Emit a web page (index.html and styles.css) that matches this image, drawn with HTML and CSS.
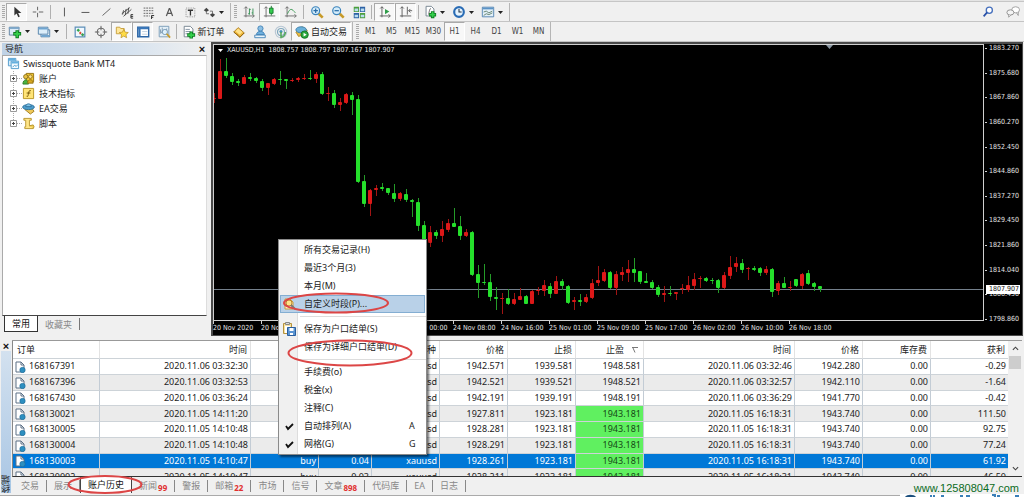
FILE: index.html
```html
<!DOCTYPE html>
<html lang="zh-CN">
<head>
<meta charset="utf-8">
<title>Swissquote Bank MT4</title>
<link rel="stylesheet" href="styles.css">
</head>
<body>
<svg class="defs" aria-hidden="true">
  <symbol id="dd" viewBox="0 0 5 3"><path d="M0 0h5L2.500 3z" fill="#222"/></symbol>
  <symbol id="doc" viewBox="0 0 12 12"><path d="M2 1h5l3 3v7H2z" fill="#fff" stroke="#5c7186"/><path d="M7 1v3h3" fill="none" stroke="#5c7186"/><circle cx="8.500" cy="9" r="2.700" fill="#2d8fc0" stroke="#1b6a98" stroke-width=".6"/></symbol>
  <symbol id="plusbox" viewBox="0 0 9 9"><path d="M1.500 1.500h6v6h-6z" fill="#fff" stroke="#999"/><path d="M3 4.500h3M4.500 3v3" stroke="#444"/></symbol>
</svg>

<header class="toolbars">
  <div class="bar">
    <div class="group">
      <span class="grip"></span>
      <button class="tool pressed" aria-label="光标"><svg viewBox="0 0 16 16"><path d="M5 2v10l2.500-2.200L9.500 14l1.700-.8-1.900-4H13z" fill="#333"/></svg></button>
      <button class="tool" aria-label="十字准线"><svg viewBox="0 0 16 16"><path d="M2 8h4M9 8h5M7.500 2v4M7.500 9v5" stroke="#555"/></svg></button>
      <span class="sep"></span>
      <button class="tool" aria-label="垂直线"><svg viewBox="0 0 16 16"><path d="M8.500 3v10" stroke="#444"/></svg></button>
      <button class="tool" aria-label="水平线"><svg viewBox="0 0 16 16"><path d="M4 8.500h9" stroke="#444"/></svg></button>
      <button class="tool" aria-label="趋势线"><svg viewBox="0 0 16 16"><path d="M4 12l9-8" stroke="#555"/></svg></button>
      <button class="tool" aria-label="通道"><svg viewBox="0 0 16 16"><path d="M2 10l9-7M4 13l9-8M4 6l-1 5M7 4.500l-1 7M10 3l-1 7" stroke="#444"/><path d="M15 11h-2.500v4H15M12.500 13H15" fill="none" stroke="#222"/></svg></button>
      <button class="tool" aria-label="斐波纳契"><svg viewBox="0 0 16 16"><path d="M3 3.500h11M3 6.500h11M3 9.500h11M3 12.500h7" stroke="#555" stroke-dasharray="2 1"/><path d="M12 16v-4h3M12 14h2" fill="none" stroke="#222"/></svg></button>
      <button class="tool" aria-label="文字"><svg viewBox="0 0 16 16"><path d="M5 12.500L8.300 4h.6l3.200 8.500M6.200 9.500H11" fill="none" stroke="#555" stroke-width="1.400"/></svg></button>
      <button class="tool" aria-label="文本标签"><svg viewBox="0 0 16 16"><path d="M3.500 3.500h10v10h-10z" fill="none" stroke="#888" stroke-dasharray="1 1"/><path d="M5.500 6h6M8.500 6v6" stroke="#333" stroke-width="1.500"/></svg></button>
      <button class="tool drop" aria-label="箭头"><svg viewBox="0 0 16 16"><path d="M2 6l3-3 3 3-3 2zM9 11l3 3 3-3-3-2z" fill="#444"/><path d="M5 7v3h3M12 10V7H9" fill="none" stroke="#666"/></svg><svg class="dd"><use href="#dd"/></svg></button>
    </div>
    <div class="group">
      <span class="grip"></span>
      <button class="tool" aria-label="柱状图"><svg viewBox="0 0 16 16"><path d="M4.500 2v12M2 12.500h12M2.500 4l2-2 2 2M12 10.500l2 2-2 2" fill="none" stroke="#666"/><path d="M8.500 4v7M7 10h1.500M8.500 5H10M12.500 4v7M11 9h1.500" stroke="#2a8a4a"/></svg></button>
      <button class="tool pressed" aria-label="阴阳烛"><svg viewBox="0 0 16 16"><path d="M3.500 2v12M1 12.500h13M1.500 4l2-2 2 2" fill="none" stroke="#666"/><path d="M9.500 1v11" stroke="#14752a"/><path d="M7.500 3.500h4v6h-4z" fill="#35cf50" stroke="#14752a"/></svg></button>
      <button class="tool" aria-label="折线图"><svg viewBox="0 0 16 16"><path d="M3.500 2v12M1 12.500h13M1.500 4l2-2 2 2M12 10.500l2 2-2 2" fill="none" stroke="#666"/><path d="M4 10c3-7 5-6 9-1" fill="none" stroke="#33954c"/></svg></button>
      <span class="sep"></span>
      <button class="tool" aria-label="放大"><svg viewBox="0 0 16 16"><path d="M10 10l4.500 4.500" stroke="#c79a28" stroke-width="3"/><circle cx="6.500" cy="6.500" r="4.500" fill="#d4ecfa" stroke="#3a82bb" stroke-width="1.400"/><path d="M4 6.500h5M6.500 4v5" stroke="#286ca8" stroke-width="1.400"/></svg></button>
      <button class="tool" aria-label="缩小"><svg viewBox="0 0 16 16"><path d="M10 10l4.500 4.500" stroke="#c79a28" stroke-width="3"/><circle cx="6.500" cy="6.500" r="4.500" fill="#d4ecfa" stroke="#3a82bb" stroke-width="1.400"/><path d="M4 6.500h5" stroke="#286ca8" stroke-width="1.400"/></svg></button>
      <button class="tool" aria-label="排列窗口"><svg viewBox="0 0 16 16"><path d="M2 2h6v6H2zM9 9h6v6H9z" fill="#4b9e3d"/><path d="M9 2h6v6H9zM2 9h6v6H2z" fill="#2d62a5"/><path d="M3 4h4v3H3zM10 4h4v3h-4zM3 11h4v3H3zM10 11h4v3h-4z" fill="#b9dcf0"/></svg></button>
      <span class="sep"></span>
      <button class="tool pressed" aria-label="自动滚动"><svg viewBox="0 0 16 16"><path d="M4.500 2v12M2 12.500h12M2.500 4l2-2 2 2M12 10.500l2 2-2 2" fill="none" stroke="#555"/><path d="M8 4.500l5 3-5 3z" fill="#2f9c49"/></svg></button>
      <button class="tool pressed" aria-label="图表平移"><svg viewBox="0 0 16 16"><path d="M3.500 2v12M1 12.500h13M1.500 4l2-2 2 2M9.500 2v9M15 6.500h-4M13 4.500l-2 2 2 2" fill="none" stroke="#555"/></svg></button>
      <span class="sep"></span>
      <button class="tool drop" aria-label="指标"><svg viewBox="0 0 16 16"><path d="M3.500 1.500h6l3 3v8h-9z" fill="#fff" stroke="#6d7b88"/><path d="M6 11c1 0 1-7 3-7" fill="none" stroke="#555"/><path d="M7 11h8M11 7v8" stroke="#0d7c1f" stroke-width="4"/><path d="M8 11h6M11 8v6" stroke="#35d04c" stroke-width="2"/></svg><svg class="dd"><use href="#dd"/></svg></button>
      <button class="tool drop" aria-label="时间周期"><svg viewBox="0 0 16 16"><circle cx="8" cy="8" r="5.500" fill="#e6f4ff" stroke="#2a6cb5" stroke-width="2.500"/><path d="M8 4.500V8h3" fill="none" stroke="#234" stroke-width="1.200"/></svg><svg class="dd"><use href="#dd"/></svg></button>
      <button class="tool drop" aria-label="模板"><svg viewBox="0 0 16 16"><path d="M1.500 2.500h13v11h-13z" fill="#e4f1fa" stroke="#4d7fae"/><path d="M2 4h12" stroke="#5b93c6" stroke-width="2"/><path d="M3 8l3-1 3 2 4-2M3 12l3-2 3 1 4-2" fill="none" stroke="#5b7b65"/></svg><svg class="dd"><use href="#dd"/></svg></button>
    </div>
    <div class="corner">
      <button class="tool" aria-label="搜索"><svg viewBox="0 0 16 16"><circle cx="9.500" cy="6" r="3.500" fill="#fff" stroke="#4670bd" stroke-width="1.500"/><path d="M7 8.500L3 13" stroke="#2850a8" stroke-width="2"/></svg></button>
      <button class="tool" aria-label="聊天"><svg viewBox="0 0 16 16"><ellipse cx="11" cy="5.500" rx="4.500" ry="3.500" fill="#fff" stroke="#999"/><ellipse cx="5" cy="8.500" rx="4" ry="3" fill="#f4f4f4" stroke="#888"/><path d="M3 11v3l3-3M12 9l2 3V8" fill="#eee" stroke="#888" stroke-width=".8"/></svg></button>
    </div>
  </div>
  <div class="bar">
    <div class="group">
      <span class="grip"></span>
      <button class="tool drop" aria-label="新图表"><svg viewBox="0 0 16 16"><path d="M1.500 2.500h11v9h-11z" fill="#dcecf7" stroke="#5a7d9b"/><path d="M1 3.500h12" stroke="#7ba6c9" stroke-width="2"/><path d="M6 10h9M10.500 6v9" stroke="#0d7c1f" stroke-width="4"/><path d="M7 10h7M10.500 7v7" stroke="#35d04c" stroke-width="2"/></svg><svg class="dd"><use href="#dd"/></svg></button>
      <button class="tool drop" aria-label="配置文件"><svg viewBox="0 0 16 16"><path d="M4.500 5.500h10v8h-10z" fill="#f3f9fd" stroke="#4b7ca5"/><path d="M1.500 2.500h11v8h-11z" fill="#dceefa" stroke="#4b7ca5"/><path d="M2 4h10M5 12.500h9" stroke="#6fa5d1" stroke-width="2"/></svg><svg class="dd"><use href="#dd"/></svg></button>
      <span class="sep"></span>
      <button class="tool" aria-label="市场报价"><svg viewBox="0 0 16 16"><path d="M2.500 2.500h11v11h-11z" fill="#f0f8ff" stroke="#5d8fb8" stroke-width="1.400"/><path d="M4 6l2-2 2 2-2 2z" fill="#32a548"/><path d="M8 7l2 2-2 2-1-2z" fill="#d64632"/><path d="M9 11l2-2 2 2-2 2z" fill="#3a9e50"/></svg></button>
      <button class="tool" aria-label="数据窗口"><svg viewBox="0 0 16 16"><circle cx="8" cy="8" r="4.500" fill="none" stroke="#555"/><path d="M8 1v5M8 10v5M1 8h5M10 8h5" stroke="#555"/></svg></button>
      <button class="tool pressed" aria-label="导航"><svg viewBox="0 0 16 16"><path d="M1.500 2.500h4l1 1.500h4v6h-9z" fill="#ffe79a" stroke="#c39a34"/><path d="M10 5l1.600 3.200 3.600.4-2.700 2.400.8 3.500-3.300-1.800-3.200 1.800.7-3.500L5 8.600l3.500-.4z" fill="#ffdc45" stroke="#b98c1c" stroke-width=".8"/></svg></button>
      <button class="tool pressed" aria-label="终端"><svg viewBox="0 0 16 16"><path d="M2 2.500h12.500v11H2z" fill="#fff" stroke="#2b65a5" stroke-width="1.600"/><path d="M2 3.500h12M4 3v10" stroke="#3976b8" stroke-width="2.500"/><path d="M7 7.500h6M7 10.500h6" stroke="#bcd"/></svg></button>
      <button class="tool" aria-label="策略测试"><svg viewBox="0 0 16 16"><path d="M2.500 1.500h11v12h-11z" fill="#e3eff7" stroke="#7497b5"/><path d="M4 5v4M6 3v5M4 10l3-4 4 5M11 4v5" fill="none" stroke="#7a97ae"/><circle cx="9" cy="8" r="3" fill="#dff1fb" stroke="#7396b3"/><path d="M11 10l4 4.500" stroke="#c99c2c" stroke-width="2"/></svg></button>
      <span class="sep"></span>
      <button class="tool labelled"><svg viewBox="0 0 16 16"><path d="M2.500 1.500h7l3 3v9h-10z" fill="#fff" stroke="#6d7b88"/><path d="M4 5h5M4 7.500h6M4 10h3" stroke="#789"/><path d="M6 11.500h9M10.500 7.500v8" stroke="#0d7c1f" stroke-width="4"/><path d="M7 11.500h7M10.500 8.500v6" stroke="#35d04c" stroke-width="2"/></svg>新订单</button>
      <button class="tool" aria-label="MetaEditor"><svg viewBox="0 0 16 16"><path d="M2 8l5-5 7 6-5 5z" fill="#f0b93c" stroke="#a9781a"/><path d="M2 8l5 4 2 2 5-5" fill="none" stroke="#8c6010"/><path d="M4 7l3-3 5 4-3 3z" fill="#ffe28a"/></svg></button>
      <button class="tool" aria-label="账户"><svg viewBox="0 0 16 16"><circle cx="8.500" cy="4" r="3" fill="#8cc0e4" stroke="#3f80b5"/><path d="M4 11c0-5 9-5 9 0z" fill="#6fb0de" stroke="#3f80b5"/><path d="M2 11.500h12v3H2z" fill="#e9f4fb" stroke="#3f80b5"/></svg></button>
      <button class="tool" aria-label="信号"><svg viewBox="0 0 16 16"><circle cx="8" cy="8" r="6.500" fill="none" stroke="#b7c6d3" stroke-width="1.200"/><circle cx="8" cy="8" r="4" fill="none" stroke="#7fa7bd" stroke-width="1.400"/><circle cx="8" cy="7.500" r="1.800" fill="#4596b5"/><path d="M8 8v7M8 14c3 0 5-3 5-6" fill="none" stroke="#55a85a" stroke-width="1.800"/></svg></button>
      <button class="tool labelled auto pressed"><svg viewBox="0 0 16 16"><path d="M1 8l7-6 6 4-3 5-7 2z" fill="#e9bd44" stroke="#a98424"/><ellipse cx="7" cy="5.500" rx="6" ry="3.500" fill="#69b0d9" stroke="#3a7ba8"/><circle cx="11" cy="11" r="4.200" fill="#28a73c" stroke="#157023"/><path d="M9.800 8.800l3.500 2.200-3.500 2.200z" fill="#fff"/></svg>自动交易</button>
    </div>
    <div class="group">
      <span class="grip"></span>
      <button class="tool period">M1</button><button class="tool period">M5</button><button class="tool period">M15</button><button class="tool period">M30</button><button class="tool period pressed">H1</button><button class="tool period">H4</button><button class="tool period">D1</button><button class="tool period">W1</button><button class="tool period">MN</button>
    </div>
  </div>
</header>

<main class="workspace">
  <aside class="navigator">
    <div class="nav-title"><span>导航</span><button class="close" aria-label="关闭导航">×</button></div>
    <div class="tree">
      <div class="root"><svg viewBox="0 0 14 14"><path d="M1.500 1.500h8v8h-8z" fill="#d6ecfa" stroke="#4f9acb"/><path d="M4.500 4.500h8v8h-8z" fill="#f3faff" stroke="#4f9acb"/><path d="M5 6h7M2 3h7" stroke="#63b0df" stroke-width="2"/><path d="M6 11l2-2 2 1 2-2" fill="none" stroke="#4f9acb"/></svg>Swissquote Bank MT4</div>
      <ul>
        <li><svg class="node"><use href="#plusbox"/></svg><svg class="ico" viewBox="0 0 14 14"><path d="M4.500 1.500h8v9h-8z" fill="#f1c834" stroke="#957313"/><circle cx="4" cy="5" r="2.300" fill="#e8c142" stroke="#8b7320"/><path d="M1 13c0-6 6-6 6 0z" fill="#4cb33f" stroke="#2c7a25"/><circle cx="9" cy="5" r="2" fill="#fae292" stroke="#957313"/><path d="M6 12c0-5 6-5 6 0z" fill="#d8a820" stroke="#957313"/></svg>账户</li>
        <li><svg class="node"><use href="#plusbox"/></svg><svg class="ico" viewBox="0 0 14 14"><path d="M1.500 1.500h11v11h-11z" fill="#ffe477" stroke="#b99422"/><path d="M9.500 4c-2-1-2 1-2.500 3s-.5 4-2 3M5 6.500h4" fill="none" stroke="#6b4c00"/></svg>技术指标</li>
        <li><svg class="node"><use href="#plusbox"/></svg><svg class="ico" viewBox="0 0 14 14"><path d="M3 8l6 5 4-3-3-4z" fill="#efc857" stroke="#a07c22"/><ellipse cx="7" cy="5.500" rx="6.300" ry="2.700" fill="#4f9fce" stroke="#2d6f9b"/><path d="M4 5c0-4 6-4 6 0z" fill="#83c4e8" stroke="#2d6f9b"/></svg>EA交易</li>
        <li><svg class="node"><use href="#plusbox"/></svg><svg class="ico" viewBox="0 0 14 14"><path d="M2 1.500h8v2H8v6h4v3H3v-2h1v-7H2z" fill="#ffe688" stroke="#b8952f"/><path d="M8 9.500l4-1 1 2-1 2" fill="#f2cf55" stroke="#b8952f"/></svg>脚本</li>
      </ul>
    </div>
    <div class="nav-tabs"><button class="active">常用</button><button>收藏夹</button></div>
  </aside>

  <section class="chart">
    <div class="plot">
      <svg class="candles" id="candles" role="img" aria-label="XAUUSD H1"></svg>
      <div class="chart-title"><svg viewBox="0 0 5 3"><path d="M0 0h5L2.500 3z" fill="#fff"/></svg><span>XAUUSD,H1</span><span>1808.757 1808.797 1807.167 1807.907</span></div>
    </div>
    <div class="prices">
      <span>1883.270</span><span>1875.680</span><span>1867.860</span><span>1860.270</span><span>1852.450</span><span>1844.860</span><span>1837.270</span><span>1829.450</span><span>1821.860</span><span>1814.040</span><span>1806.450</span><span>1798.860</span>
      <strong>1807.907</strong>
    </div>
    <div class="times"><span>20 Nov 2020</span><span>20 Nov 17:00</span><span>23 Nov 02:00</span><span>23 Nov 10:00</span><span>24 Nov 00:00</span><span>24 Nov 08:00</span><span>24 Nov 16:00</span><span>25 Nov 01:00</span><span>25 Nov 09:00</span><span>25 Nov 17:00</span><span>26 Nov 02:00</span><span>26 Nov 10:00</span><span>26 Nov 18:00</span></div>
  </section>
</main>

<section class="terminal">
  <div class="side"><button class="close" aria-label="关闭终端">×</button><div class="side-label"><span>终端</span></div></div>
  <div class="terminal-body">
    <div class="history">
      <div class="table-wrap">
      <table>
        <colgroup><col class="c-order"><col class="c-time"><col class="c-num"><col class="c-lot"><col class="c-num"><col class="c-num"><col class="c-num"><col class="c-num"><col class="c-time"><col class="c-num"><col class="c-num"><col class="c-profit"></colgroup>
        <thead><tr><th>订单</th><th>时间</th><th>类型</th><th>手数</th><th>交易品种</th><th>价格</th><th>止损</th><th class="sorted">止盈<svg viewBox="0 0 6 6"><path d="M0 .5h6M1 1l2 4.500" fill="none" stroke="#777"/></svg></th><th>时间</th><th>价格</th><th>库存费</th><th>获利</th></tr></thead>
        <tbody>
          <tr><td><svg><use href="#doc"/></svg>168167391</td><td>2020.11.06 03:32:30</td><td>buy</td><td>0.04</td><td>xauusd</td><td>1942.571</td><td>1939.581</td><td>1948.581</td><td>2020.11.06 03:32:46</td><td>1942.280</td><td>0.00</td><td>-0.29</td></tr>
          <tr><td><svg><use href="#doc"/></svg>168167396</td><td>2020.11.06 03:32:53</td><td>buy</td><td>0.04</td><td>xauusd</td><td>1942.521</td><td>1939.521</td><td>1948.521</td><td>2020.11.06 03:32:57</td><td>1942.110</td><td>0.00</td><td>-1.64</td></tr>
          <tr><td><svg><use href="#doc"/></svg>168167430</td><td>2020.11.06 03:36:24</td><td>buy</td><td>0.01</td><td>xauusd</td><td>1942.191</td><td>1939.191</td><td>1948.191</td><td>2020.11.06 03:36:29</td><td>1941.770</td><td>0.00</td><td>-0.42</td></tr>
          <tr><td><svg><use href="#doc"/></svg>168130021</td><td>2020.11.05 14:11:20</td><td>buy</td><td>0.07</td><td>xauusd</td><td>1927.811</td><td>1923.181</td><td class="hit">1943.181</td><td>2020.11.05 16:18:31</td><td>1943.740</td><td>0.00</td><td>111.50</td></tr>
          <tr><td><svg><use href="#doc"/></svg>168130005</td><td>2020.11.05 14:10:48</td><td>buy</td><td>0.06</td><td>xauusd</td><td>1928.281</td><td>1923.181</td><td class="hit">1943.181</td><td>2020.11.05 16:18:31</td><td>1943.740</td><td>0.00</td><td>92.75</td></tr>
          <tr><td><svg><use href="#doc"/></svg>168130004</td><td>2020.11.05 14:10:48</td><td>buy</td><td>0.05</td><td>xauusd</td><td>1928.291</td><td>1923.181</td><td class="hit">1943.181</td><td>2020.11.05 16:18:31</td><td>1943.740</td><td>0.00</td><td>77.24</td></tr>
          <tr class="selected"><td><svg><use href="#doc"/></svg>168130003</td><td>2020.11.05 14:10:47</td><td>buy</td><td>0.04</td><td>xauusd</td><td>1928.261</td><td>1923.181</td><td class="hit">1943.181</td><td>2020.11.05 16:18:31</td><td>1943.740</td><td>0.00</td><td>61.92</td></tr>
          <tr><td><svg><use href="#doc"/></svg>168130002</td><td>2020.11.05 14:10:47</td><td>buy</td><td>0.03</td><td>xauusd</td><td>1928.211</td><td>1923.181</td><td class="hit">1943.181</td><td>2020.11.05 16:18:31</td><td>1943.740</td><td>0.00</td><td>46.50</td></tr>
        </tbody>
      </table>
      </div>
      <div class="scroll"><svg viewBox="0 0 8 5"><path d="M1 4l3-3 3 3" fill="none" stroke="#444" stroke-width="1.300"/></svg><i></i><svg viewBox="0 0 8 5"><path d="M1 1l3 3 3-3" fill="none" stroke="#444" stroke-width="1.300"/></svg></div>
    </div>
    <nav class="tabs"><button>交易</button><button>展示</button><button class="active">账户历史</button><button>新闻<sub>99</sub></button><button>警报</button><button>邮箱<sub>22</sub></button><button>市场</button><button>信号</button><button>文章<sub>898</sub></button><button>代码库</button><button>EA</button><button>日志</button></nav>
  </div>
</section>
<footer class="edge"></footer>

<div class="menu" role="menu">
  <button role="menuitem">所有交易记录(H)</button>
  <button role="menuitem">最近3个月(3)</button>
  <button role="menuitem">本月(M)</button>
  <button role="menuitem" class="hot"><svg viewBox="0 0 14 14"><path d="M3 2h5l3 3v7H3z" fill="#fff3c8" stroke="#c99a3a"/><circle cx="7" cy="6" r="3" fill="#ffe28a" stroke="#b8862b"/><path d="M9 8l4 4" stroke="#777" stroke-width="2"/></svg>自定义时段(P)...</button>
  <hr>
  <button role="menuitem"><svg viewBox="0 0 14 14"><path d="M1.500 1.500h8v10h-8z" fill="#f7e2a0" stroke="#b6923c"/><path d="M3.500 .5h4v2h-4z" fill="#ddd" stroke="#888"/><path d="M3 4h5v7H3z" fill="#fff"/><path d="M5.500 5.500h8v8h-8z" fill="#5a94d2" stroke="#2b5f9e"/><path d="M7.500 6h4v3h-4zM8 11h3v2H8z" fill="#fff"/></svg>保存为户口结单(S)</button>
  <button role="menuitem">保存为详细户口结单(D)</button>
  <hr>
  <button role="menuitem">手续费(o)</button>
  <button role="menuitem">税金(x)</button>
  <button role="menuitem">注释(C)</button>
  <button role="menuitem"><svg viewBox="0 0 14 14"><path d="M4 7l2 3 5-5" fill="none" stroke="#111" stroke-width="1.800"/></svg>自动排列(A)<kbd>A</kbd></button>
  <button role="menuitem"><svg viewBox="0 0 14 14"><path d="M4 7l2 3 5-5" fill="none" stroke="#111" stroke-width="1.800"/></svg>网格(G)<kbd>G</kbd></button>
</div>

<svg class="ring ring-period" viewBox="0 0 106 22"><ellipse cx="53" cy="11" rx="52" ry="9.500"/></svg>
<svg class="ring ring-save" viewBox="0 0 126 28"><ellipse cx="63" cy="14" rx="61.500" ry="12.500"/></svg>
<svg class="ring ring-tab" viewBox="0 0 76 19"><ellipse cx="38" cy="9.500" rx="36.500" ry="8.500"/></svg>

<a class="watermark" href="#">www.125808047.com</a>
<svg class="logo" viewBox="0 0 124 4" aria-hidden="true"><path d="M0 1h124v3H0z" fill="#fff"/><path d="M5 4c2-3 9-3 11 0z" fill="#1c4f7e"/><path d="M31 2v2M33 3h2M41 3h3M60 3h3M66 3h4M92 2h3v2M97 3h3M115 3h4" stroke="#3a7fb8" stroke-width="2"/></svg>
<script src="chart.js"></script>
</body>
</html>
```
FILE: styles.css
```css
* { box-sizing: border-box; }
body {
  margin: 0;
  min-height: 100vh;
  display: flex;
  flex-direction: column;
  background: #f0f0f0;
  color: #222;
  font: 9px/12px "Noto Sans", "Noto Sans CJK SC", sans-serif;
  position: relative;
  overflow: hidden;
}
button { font: inherit; color: inherit; background: none; border: 0; padding: 0; margin: 0; }
.defs { display: none; }

.toolbars { border-top: 1px solid #e4e4e4; box-shadow: inset 0 1px #c6c6c6; padding-top: 2px; }
.bar { display: flex; height: 19px; border-bottom: 1px solid #c4c4c4; }
.bar + .bar { height: 20px; }
.group { display: flex; align-items: stretch; padding-right: 1px; border-right: 1px solid #b5b5b5; }
.group + .group { margin-left: 1px; }
.grip { width: 6px; margin: 2px 0; background: repeating-linear-gradient(#aaa 0 1px, transparent 1px 2px) 2px 0 / 3px 100% no-repeat; }
.tool { width: 21px; display: flex; align-items: center; justify-content: center; flex: none; white-space: nowrap; }
.tool svg { width: 14px; height: 14px; }
.pressed { background: #f8f8f8; border: 1px solid; border-color: #a9a9a9 #fff #fff #a9a9a9; }
.drop { width: 29px; justify-content: flex-start; padding-left: 2px; gap: 3px; }
.tool .dd { width: 5px; height: 3px; }
.sep { width: 5px; margin: 2px 0; background: linear-gradient(#b0b0b0, #b0b0b0) 2px 0 / 1px 100% no-repeat; }
.labelled { width: 49px; gap: 1px; }
.auto { width: 60px; gap: 2px; }
.period { font: 8px/10px "DejaVu Sans Condensed", sans-serif; color: #444; }
.corner { margin-left: auto; padding-right: 1px; display: flex; gap: 4px; }

.workspace { flex: 1; min-height: 294px; display: flex; gap: 2px; padding-right: 1px; }
.navigator { width: 209px; display: flex; flex-direction: column; flex: none; padding: 1px 2px 0 2px; }
.nav-title { display: flex; justify-content: space-between; align-items: center; height: 12px; padding: 0 1px 0 3px; background: linear-gradient(90deg, #bfd2e6, #d5e2ef 60%, #f0f0f0); }
.close { font: bold 11px/10px "Liberation Sans", sans-serif; width: 8px; color: #111; }
.tree { flex: 1; background: #fff; border: 1px solid #aaa; border-right-color: #ddd; border-bottom-color: #444; padding: 0 4px; }
.root { display: flex; align-items: center; gap: 3px; height: 15px; line-height: 15px; }
.tree svg { width: 13px; height: 13px; flex: none; }
.tree ul { list-style: none; margin: 0 0 0 6px; padding: 0; background: repeating-linear-gradient(#aaa 0 1px, transparent 1px 2px) 0 0 / 1px 52px no-repeat; }
.tree li { display: flex; align-items: center; height: 15px; line-height: 15px; gap: 4px; background: repeating-linear-gradient(90deg, #aaa 0 1px, transparent 1px 2px) 0 7px / 10px 1px no-repeat; }
.tree .node { width: 9px; height: 9px; margin-left: -4px; }
.nav-tabs { height: 20px; display: flex; align-items: flex-start; padding-left: 2px; color: #888; }
.nav-tabs button { height: 16px; padding: 0 7px; border-right: 1px solid #777; line-height: 15px; }
.nav-tabs button:not(.active) { height: 12px; margin-top: 2px; line-height: 11px; }
.nav-tabs .active { background: #fff; color: #111; border: 1px solid #333; border-top: 0; }

.chart { flex: 1; min-width: 0; background: #000; border: 2px solid #4a4a4a; border-right-width: 1px; border-bottom-width: 1px; display: grid; grid-template: 1fr 14px / 1fr 38px; color: #e4e4e4; font: 7px/9px "DejaVu Sans Condensed", sans-serif; }
.plot { border: 1px solid #d0d0d0; position: relative; overflow: hidden; }
.candles { display: block; width: 100%; height: 100%; overflow: hidden; }
.chart-title { position: absolute; top: 1px; left: 4px; display: flex; align-items: center; gap: 4px; }
.chart-title svg { width: 5px; height: 3px; }
.prices { position: relative; display: flex; flex-direction: column; justify-content: space-between; padding: 0 0 0 1px; margin-bottom: -3px; }
.prices span { display: flex; align-items: center; gap: 2px; }
.prices span::before { content: ""; width: 2px; height: 1px; background: #d0d0d0; }
.prices strong { position: absolute; top: 241px; left: 2px; right: 2px; padding-left: 3px; background: #fff; color: #111; font-weight: normal; }
.times { display: flex; grid-column: 1 / -1; }
.times span { width: 48px; flex: none; white-space: nowrap; line-height: 14px; background: linear-gradient(#d0d0d0, #d0d0d0) 0 0 / 1px 3px no-repeat; }

.terminal { display: flex; margin-top: 4px; padding-right: 2px; }
.side { width: 12px; padding: 1px 1px 2px 1px; display: flex; flex-direction: column; align-items: center; }
.side-label { flex: 1; width: 10px; background: linear-gradient(#d3e1ef, #a9c6e4); display: flex; align-items: flex-end; }
.side-label span { writing-mode: vertical-rl; transform: rotate(180deg); line-height: 10px; white-space: nowrap; }
.terminal-body { flex: 1; min-width: 0; border-top: 1px solid #999; }
.history { height: 136px; overflow: hidden; display: flex; background: #fff; border-bottom: 1px solid #333; border-left: 1px solid #888; }
.table-wrap { flex: 1; }
table { width: 100%; height: 144px; table-layout: fixed; border-collapse: separate; border-spacing: 0; line-height: 14px; }
.c-order { width: 87px; } .c-time { width: 151px; } .c-num { width: 68px; } .c-lot { width: 53px; } .c-profit { width: 77px; }
th, td { padding: 0 2px; text-align: right; white-space: nowrap; border-right: 1px solid #c3ccd5; border-bottom: 1px solid #cdd3d8; }
th { font-weight: normal; padding-right: 3px; height: 18px; border-right-color: #e3e3e3; }
th:first-child { text-align: left; padding-left: 4px; }
td:first-child { text-align: left; padding-left: 1px; }
td:last-child, th:last-child { border-right: 0; }
td svg { width: 12px; height: 12px; vertical-align: middle; margin-right: 3px; }
th svg { width: 6px; height: 6px; margin: 0 2px 0 8px; }
tbody tr:nth-child(even) { background: #ebebeb; }
tbody tr.selected { background: #0078d7; color: #fff; }
td.hit { background: #60f060; color: #164816; }
.scroll { width: 14px; background: #f0f0f0; display: flex; flex-direction: column; align-items: center; padding: 5px 0; }
.scroll svg { width: 7px; height: 5px; }
.scroll i { width: 12px; height: 13px; margin: 5px 0 auto; background: #cdcdcd; }
.tabs { display: flex; height: 18px; padding: 0 0 0 2px; color: #888; }
.tabs button { height: 12px; margin-top: 3px; padding: 0 7px; border-right: 1px solid #888; line-height: 11px; white-space: nowrap; display: flex; }
.tabs .active { height: 16px; margin-top: 0; line-height: 16px; background: #fff; color: #111; border-left: 1px solid #444; border-color: #444; }
.tabs sub { color: #e03030; font: bold 8px/8px "Noto Sans", sans-serif; margin: 4px 0 0 1px; }
.edge { height: 2px; border-top: 1px solid #aaa; background: #fff; }

.menu { position: absolute; left: 278px; top: 239px; width: 149px; padding: 1px; border: 1px solid #8a8a8a; box-shadow: 2px 2px 2px #0008; background: linear-gradient(90deg, #f0f0f0 18px, #ddd 18px 19px, #fff 19px); display: flex; flex-direction: column; }
.menu button { height: 18px; display: grid; grid-template-columns: 24px 1fr 16px; align-items: center; text-align: left; white-space: nowrap; }
.menu button::before { content: ""; grid-column: 1; grid-row: 1; }
.menu svg { grid-column: 1; grid-row: 1; width: 14px; height: 14px; margin-left: 2px; }
.menu kbd { font: inherit; grid-column: 3; }
.menu .hot { background: #b9d1e8; box-shadow: inset 0 0 0 1px #84aed2; }
.menu hr { width: 126px; height: 1px; border: 0; margin: 3px 0 3px 20px; background: #ddd; }

.ring { position: absolute; fill: none; stroke: #dc4646; stroke-width: 2; }
.ring-period { left: 283px; top: 292px; width: 106px; height: 22px; }
.ring-save { left: 287px; top: 339px; width: 126px; height: 28px; }
.ring-tab { left: 67px; top: 475px; width: 76px; height: 19px; }
.watermark { position: absolute; right: 5px; bottom: 2px; font: 11px/13px "Liberation Sans", sans-serif; color: #0b6b1c; text-decoration: none; }
.logo { position: absolute; right: 0; bottom: 0; width: 124px; height: 4px; }
```
FILE: chart.js
```js
// Each candle: colour, wick top, wick bottom, body top, body bottom (screen rows).
const candles = `
r 93 103 98 99|r 59 99 71 99|g 58 78 71 76|g 73 85 76 82|g 79 86 81 83|r 75 84 77 84|g 73 81 77 79|g 77 83 78 81
g 79 91 81 88|r 83 95 83 88|r 78 85 79 84|g 71 85 79 80|g 79 89 79 81|r 78 82 80 81|r 77 82 78 80|r 74 80 78 79
g 70 80 78 79|r 72 83 74 79|g 72 95 74 94|r 87 101 93 94|g 90 108 93 105|r 98 111 102 105|r 93 104 94 103|g 92 115 95 100
g 95 183 99 182|g 175 207 181 204|r 189 216 190 204|r 185 196 188 190|g 183 191 187 189|g 188 195 188 193|g 184 202 193 199|r 192 201 193 199
g 189 202 194 200|g 199 217 200 202|g 198 231 202 226|g 221 245 225 240|r 226 247 232 243|g 230 239 232 236|r 221 242 229 236|r 219 232 223 230
g 208 227 223 227|g 216 240 226 236|r 229 237 232 236|g 231 276 232 275|g 265 298 274 283|g 264 285 282 283|g 274 301 282 297|g 287 310 297 299
r 293 314 298 299|g 289 305 298 304|r 293 305 299 304|r 288 300 296 300|g 295 304 296 304|r 290 304 291 304|r 287 295 290 291|r 280 296 285 291
g 283 298 286 294|r 276 294 281 294|g 279 290 281 286|g 285 304 286 303|r 297 310 300 302|g 294 306 300 302|r 294 303 297 302|r 279 299 283 298
r 266 286 280 283|r 269 282 272 281|g 271 289 272 288|r 271 295 274 288|r 267 281 272 275|r 260 282 269 273|g 258 282 269 273|g 271 284 271 282
g 273 283 281 283|g 280 289 282 288|g 285 297 287 295|r 286 302 293 295|g 286 296 293 294|r 292 300 292 294|r 284 294 288 289|r 276 292 285 290
r 273 290 279 286|r 276 288 278 279|g 277 282 278 281|g 278 284 280 281|g 279 293 280 288|r 272 289 275 288|r 256 279 267 276|r 257 272 263 267
g 259 273 263 270|r 267 280 268 269|g 266 271 268 270|g 267 276 268 273|r 266 275 269 273|g 268 297 269 292|r 281 295 283 291|g 277 288 283 288
r 281 291 287 288|g 279 287 279 286|r 273 289 274 286|g 270 285 273 284|g 282 291 283 287|g 286 292 286 289`
  .trim().split(/[|\n]/).map(s => s.split(" "));

const ORIGIN_Y = 45;
const STEP = 6;
const NS = "http://www.w3.org/2000/svg";
const svg = document.getElementById("candles");

function add(name, attrs) {
  const el = document.createElementNS(NS, name);
  for (const key in attrs) el.setAttribute(key, attrs[key]);
  svg.appendChild(el);
}

add("rect", { x: 0, y: 244, width: "100%", height: 1, fill: "#74808c" });
candles.forEach(([colour, high, low, top, bottom], i) => {
  const x = i * STEP;
  const green = colour === "g";
  add("rect", { x: x, y: high - ORIGIN_Y, width: 1, height: low - high, fill: green ? "#249a28" : "#a01414" });
  add("rect", { x: x - 2, y: top - ORIGIN_Y, width: 4, height: Math.max(1, bottom - top), rx: 1, fill: green ? "#25e02b" : "#dc1818" });
});
add("path", { d: "M612 0h7l-3.500 4z", fill: "#8a97a3" });
```
